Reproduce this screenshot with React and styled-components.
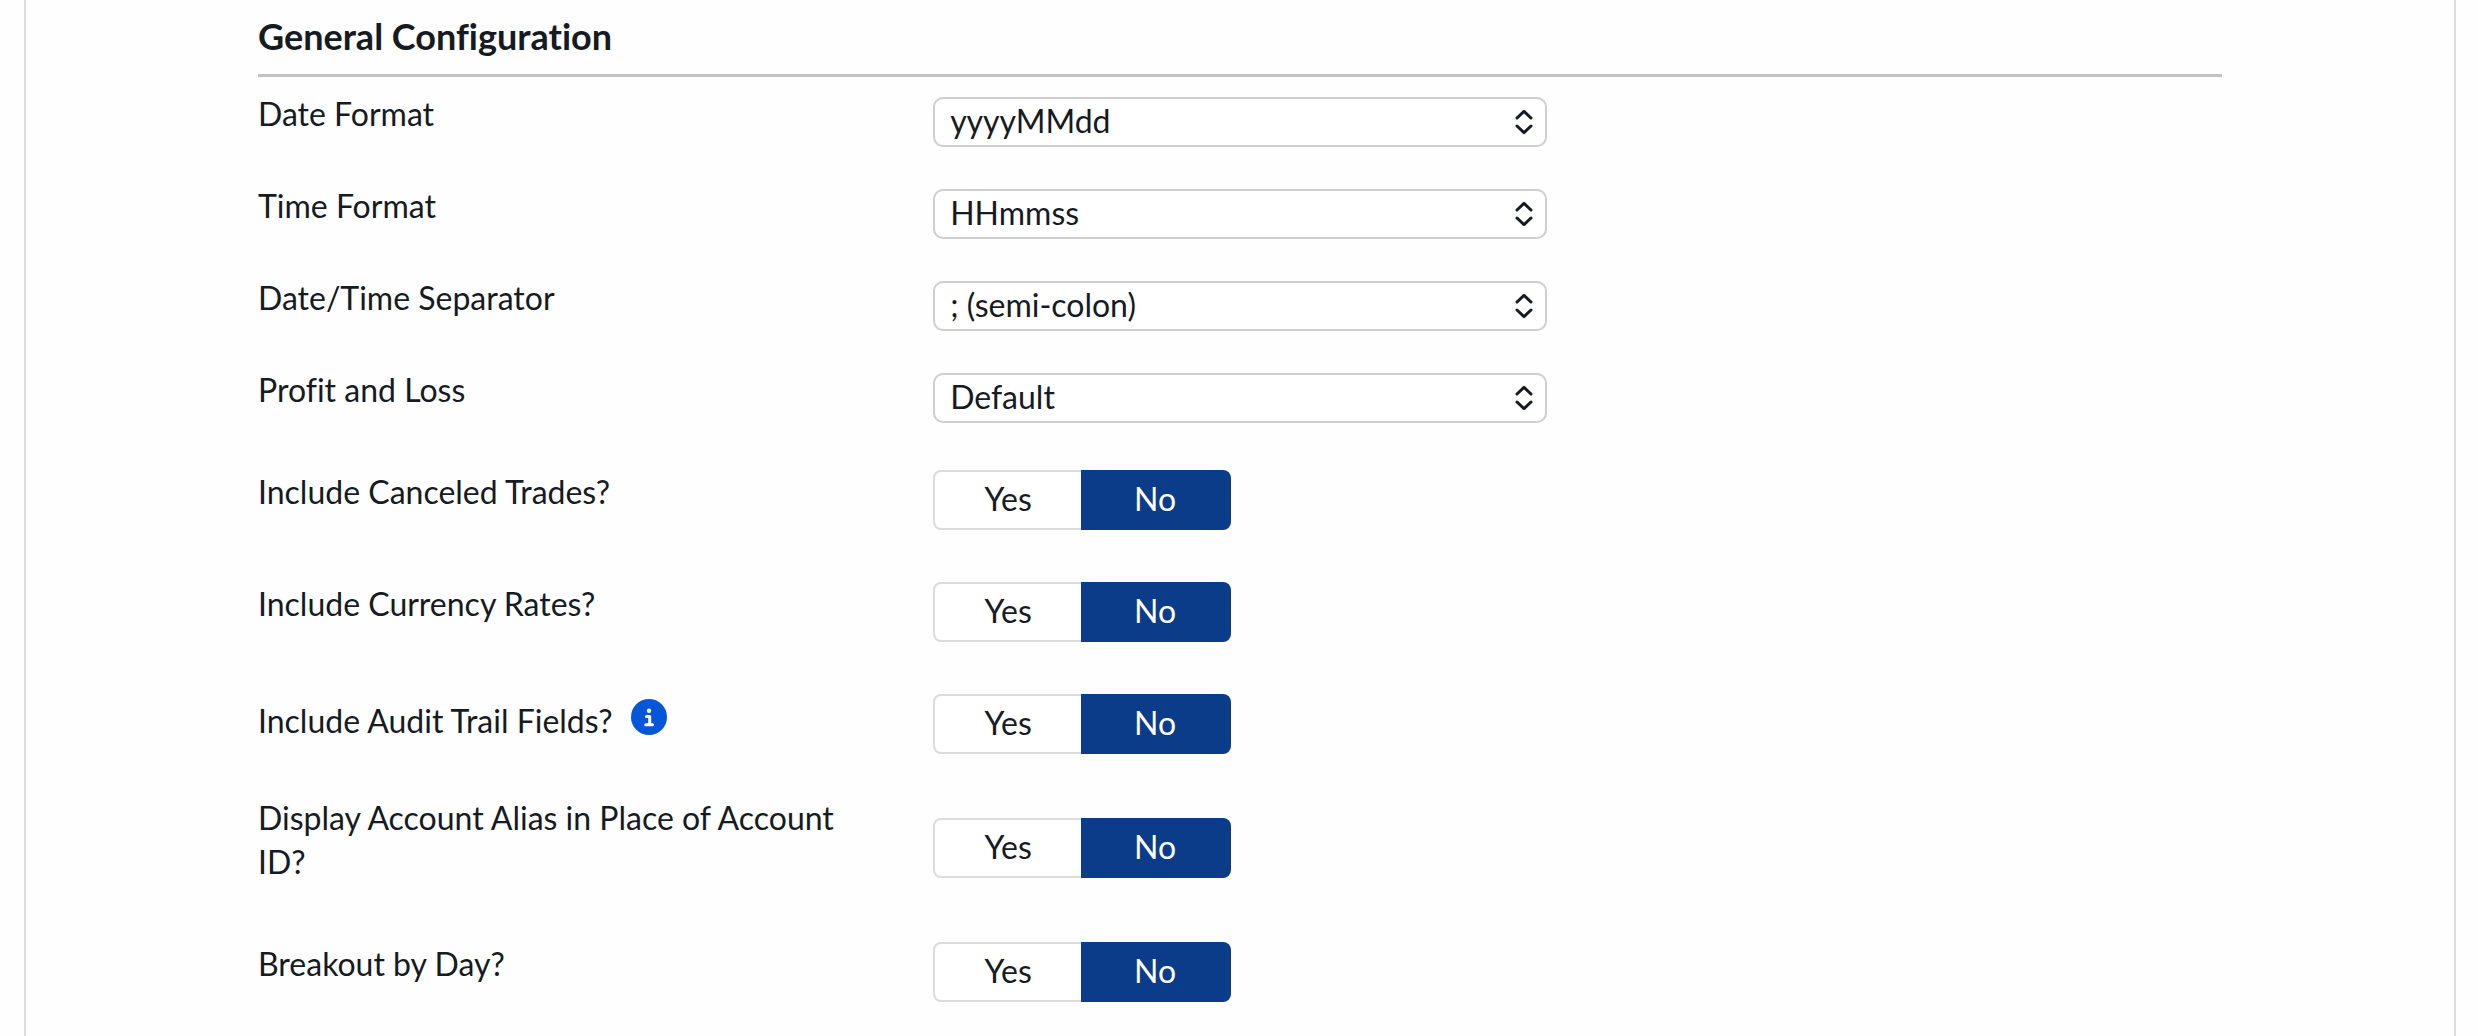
import React, { useState } from 'react';
import styled, { createGlobalStyle, css } from 'styled-components';

const selects = [
    { id: 'dateFormat', label: 'Date Format', options: ['yyyyMMdd', 'MMddyyyy', 'ddMMyyyy'] },
    { id: 'timeFormat', label: 'Time Format', options: ['HHmmss', 'HHmm', 'HH:mm:ss'] },
    { id: 'separator', label: 'Date/Time Separator', options: ['; (semi-colon)', ', (comma)', '(space)'] },
    { id: 'profitLoss', label: 'Profit and Loss', options: ['Default', 'FIFO'] },
];

const toggles = [
    { id: 'canceledTrades', label: 'Include Canceled Trades?' },
    { id: 'currencyRates', label: 'Include Currency Rates?' },
    { id: 'auditTrail', label: 'Include Audit Trail Fields?', info: true },
    { id: 'accountAlias', label: 'Display Account Alias in Place of Account ID?' },
    { id: 'breakoutByDay', label: 'Breakout by Day?' },
];

const SelectField = ({ id, label, options }) => {
    const [value, setValue] = useState(options[0]);

    return (
        <Row>
            <Label htmlFor={id}>{label}</Label>
            <SelectBox>
                <Select id={id} value={value} onChange={(e) => setValue(e.target.value)}>
                    {options.map((option) => (
                        <option key={option}>{option}</option>
                    ))}
                </Select>
                <Chevrons viewBox="0 0 18 26" aria-hidden="true">
                    <path d="M2 9 L9 2.4 L16 9 M2 17 L9 23.6 L16 17" />
                </Chevrons>
            </SelectBox>
        </Row>
    );
};

const ToggleField = ({ id, label, info }) => {
    const [value, setValue] = useState('No');

    return (
        <Row role="radiogroup" aria-labelledby={`${id}-label`}>
            <Label as="div" $info={info}>
                <span id={`${id}-label`}>{label}</span>
                {info && (
                    <InfoButton type="button" aria-label="More information">
                        <svg viewBox="0 0 36 36" aria-hidden="true">
                            <circle cx="18" cy="18" r="18" fill="#0657d8" />
                            <circle cx="18" cy="11.8" r="2.2" fill="#fff" />
                            <path d="M15.5 17.4 H18.7 V25.8 M14.7 25.8 H21.5" />
                        </svg>
                    </InfoButton>
                )}
            </Label>
            <Toggle>
                {['Yes', 'No'].map((option) => (
                    <ToggleOption key={option}>
                        <input
                            type="radio"
                            name={id}
                            value={option}
                            checked={value === option}
                            onChange={() => setValue(option)}
                        />
                        {option}
                    </ToggleOption>
                ))}
            </Toggle>
        </Row>
    );
};

const App = () => {
    return (
        <>
            <GlobalStyle />
            <Panel>
                <Title>General Configuration</Title>
                <Form>
                    {selects.map((field) => (
                        <SelectField key={field.id} {...field} />
                    ))}
                    {toggles.map((field) => (
                        <ToggleField key={field.id} {...field} />
                    ))}
                </Form>
            </Panel>
        </>
    );
};

export default App;

// Styled Components
const GlobalStyle = createGlobalStyle`
  * {
    box-sizing: border-box;
  }

  body {
    margin: 0;
    background-color: #fefefe;
    color: #161a23;
    font-family: Lato, "Liberation Sans", sans-serif;
    font-size: 32px;
    font-variant-ligatures: none;
    line-height: 44px;
  }
`;

const Panel = styled.main`
  min-height: 100vh;
  margin: 0 22px 0 24px;
  padding: 12px 232px 24px;
  border: solid #dcdcdc;
  border-width: 0 2px;
`;

const Title = styled.h2`
  margin: 0 0 15px;
  padding-bottom: 14px;
  border-bottom: 3px solid #c2c2c2;
  font-size: 36px;
  font-weight: 700;
  line-height: 48px;
`;

const Form = styled.form`
  display: flex;
  flex-direction: column;
  gap: 32px;
`;

const Row = styled.div`
  display: grid;
  grid-template-columns: 11fr 10fr 11fr;
  align-items: center;
`;

const Label = styled.label`
  display: flex;
  align-items: center;
  padding: 0 60px 16px 0;

  ${({ $info }) => $info && css`
    padding-bottom: 6px;
  `}
`;

const InfoButton = styled.button`
  flex: none;
  width: 36px;
  height: 36px;
  margin: 0 0 8px 18px;
  padding: 0;
  border: 0;
  border-radius: 50%;
  background: none;
  cursor: pointer;

  svg {
    display: block;
  }

  path {
    fill: none;
    stroke: #fff;
    stroke-width: 3;
    stroke-linecap: round;
    stroke-linejoin: round;
  }
`;

const SelectBox = styled.div`
  position: relative;
`;

const Select = styled.select`
  display: block;
  width: 100%;
  height: 50px;
  padding: 0 48px 4px 15px;
  border: 2px solid #cfcfcf;
  border-radius: 10px;
  background-color: #fff;
  color: inherit;
  font: inherit;
  appearance: none;
`;

const Chevrons = styled.svg`
  position: absolute;
  top: 12px;
  right: 14px;
  width: 18px;
  height: 26px;
  fill: none;
  stroke: #161a23;
  stroke-width: 3;
  stroke-linecap: round;
  stroke-linejoin: round;
  pointer-events: none;
`;

const Toggle = styled.div`
  display: flex;
  padding: 10px 0;
`;

const ToggleOption = styled.label`
  display: flex;
  align-items: center;
  justify-content: center;
  width: 150px;
  height: 60px;
  padding-bottom: 2px;
  border: 2px solid #dcdcdc;
  background-color: #fff;
  cursor: pointer;

  &:first-child {
    width: 148px;
    border-right: 0;
    border-radius: 8px 0 0 8px;
  }

  &:last-child {
    border-left: 0;
    border-radius: 0 8px 8px 0;
  }

  &:has(input:checked) {
    border-color: #0a3c8a;
    background-color: #0a3c8a;
    color: #fff;
  }

  &:has(input:focus-visible) {
    outline: 3px solid #0657d8;
  }

  input {
    width: 0;
    height: 0;
    margin: 0;
    appearance: none;
  }
`;
